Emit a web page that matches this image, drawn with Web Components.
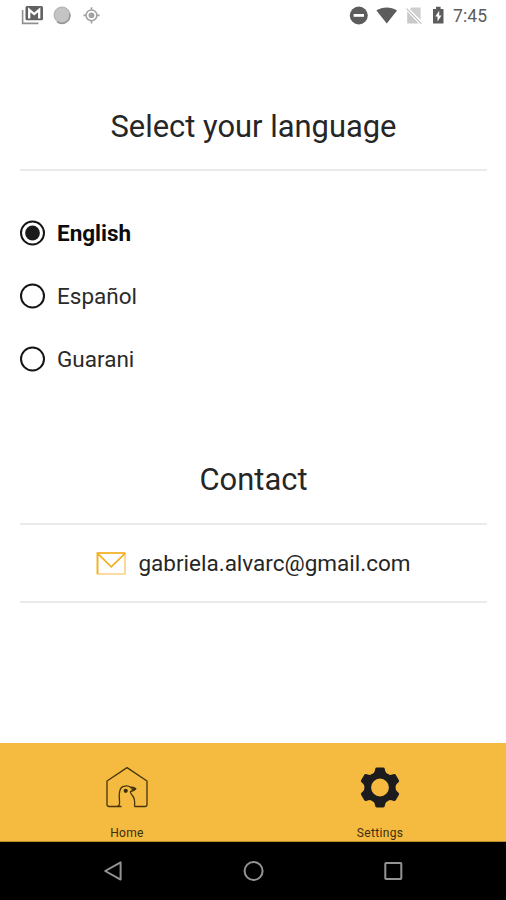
<!DOCTYPE html>
<html lang="en">
<head>
<meta charset="utf-8">
<meta name="viewport" content="width=device-width, initial-scale=1">
<title>Settings</title>
<style>
  html, body {
    margin: 0;
    height: 100%;
    overflow: hidden;
    background: #fff;
    font-family: Roboto, "Liberation Sans", sans-serif;
  }
</style>
</head>
<body>
<settings-app></settings-app>

<script>
class StatusBar extends HTMLElement {
  constructor() {
    super();
    this.root = this.attachShadow({ mode: 'open' });
  }

  connectedCallback() {
    this.root.innerHTML = `
      <style>
        :host { display: flex; justify-content: space-between; height: 32px; }
        svg { display: block; }
        .right { display: flex; }
        time {
          width: 53px;
          font-size: 17.5px;
          line-height: 32px;
          letter-spacing: 0.1px;
          color: #5c5c5c;
        }
      </style>
      <svg width="110" height="32" viewBox="0 0 110 32">
        <path d="M22.6 10v13.4H38.5" fill="none" stroke="#909090" stroke-width="1.6"/>
        <rect x="25.5" y="6" width="17.5" height="14.2" rx="1.5" fill="#626262"/>
        <path d="M29.2 18.5V9.8l5 4.3 5-4.3v8.7" fill="none" stroke="#fff" stroke-width="2.3"/>
        <circle cx="62" cy="15" r="8" fill="#c4c4c4" stroke="#b0b0b0"/>
        <path d="M57 21.6a8 8 0 0 0 12.7-8" fill="none" stroke="#949494" stroke-width="1.5"/>
        <circle cx="91.5" cy="15.3" r="5.4" fill="none" stroke="#a2a2a2" stroke-width="1.5"/>
        <circle cx="91.5" cy="15.3" r="2.9" fill="#a2a2a2"/>
        <path d="M91.5 7.2v3M91.5 20.4v3M83.4 15.3h3M96.6 15.3h3" stroke="#a2a2a2" stroke-width="1.7"/>
      </svg>
      <div class="right">
        <svg width="113" height="32" viewBox="340 0 113 32">
          <circle cx="358.8" cy="15.5" r="9" fill="#5c5c5c"/>
          <rect x="353.6" y="14" width="10.4" height="2.8" fill="#fff"/>
          <path d="M376.4 10.6c6-4.3 14.6-4.3 20.6 0L386.8 23.4z" fill="#5c5c5c"/>
          <path d="M411.6 7.6h9v13.4L408.8 9.8z" fill="#cfcfcf"/>
          <path d="M407.2 11.6V23.4h11.6z" fill="#c9c9c9"/>
          <path d="M406.6 8.6l14.8 15" stroke="#bdbdbd" stroke-width="1.3"/>
          <path d="M408.2 8.4l13.6 13.6" stroke="#fff" stroke-width="1.3"/>
          <path d="M433 9h3V6.8h4.6V9h2.9v14.6H433z" fill="#5c5c5c"/>
          <path d="M439.2 10.8l-3.9 5.8h2.2v4.8l4-6h-2.3z" fill="#fff"/>
        </svg>
        <time>7:45</time>
      </div>
    `;
  }
}
customElements.define('status-bar', StatusBar);

class SectionTitle extends HTMLElement {
  constructor() {
    super();
    this.root = this.attachShadow({ mode: 'open' });
    this.root.innerHTML = `
      <style>
        :host {
          display: block;
          height: 64px;
          border-bottom: 2px solid #ebebeb;
          text-align: center;
        }
        h2 {
          margin: 0;
          padding-top: var(--title-offset, 1px);
          font-size: 30.9px;
          font-weight: 400;
          line-height: 41px;
          color: #262626;
        }
      </style>
      <h2><slot></slot></h2>
    `;
  }
}
customElements.define('section-title', SectionTitle);

class LanguageOption extends HTMLElement {
  constructor() {
    super();
    this.root = this.attachShadow({ mode: 'open' });
  }

  connectedCallback() {
    const dot = this.hasAttribute('checked')
      ? '<circle cx="12.5" cy="13" r="7.4" fill="#1a1a1a"/>' : '';
    this.root.innerHTML = `
      <style>
        :host {
          display: flex;
          align-items: center;
          gap: 11px;
          height: 26px;
          font-size: 22.5px;
          color: #2a2a2a;
          cursor: pointer;
        }
        :host([checked]) { font-weight: 700; color: #0c0c0c; }
        span { line-height: 28px; }
      </style>
      <svg width="26" height="26" viewBox="0 0 26 26">
        <circle cx="12.5" cy="13" r="11.5" fill="none" stroke="#141414" stroke-width="2"/>
        ${dot}
      </svg>
      <span><slot></slot></span>
    `;
  }
}
customElements.define('language-option', LanguageOption);

class ContactRow extends HTMLElement {
  constructor() {
    super();
    this.root = this.attachShadow({ mode: 'open' });
    this.root.innerHTML = `
      <style>
        :host {
          display: flex;
          align-items: center;
          justify-content: center;
          gap: 12px;
          height: 76px;
          border-bottom: 2px solid #ebebeb;
          font-size: 22.5px;
          color: #262626;
        }
        span { padding-bottom: 1px; }
      </style>
      <svg width="30" height="23" viewBox="0 0 30 23">
        <path d="M1.5 22V1H29V22Z" fill="none" stroke="#fbd084" stroke-width="1.6"/>
        <path d="M1.5 22V1H29M1.5 1.4L15.3 14.8 29 1.4" fill="none" stroke="#f5b020" stroke-width="1.7"/>
      </svg>
      <span><slot></slot></span>
    `;
  }
}
customElements.define('contact-row', ContactRow);

class TabItem extends HTMLElement {
  constructor() {
    super();
    this.root = this.attachShadow({ mode: 'open' });
    this.root.innerHTML = `
      <style>
        :host {
          flex: 1;
          display: flex;
          flex-direction: column;
          align-items: center;
          padding-top: 22px;
          font-size: 12px;
          letter-spacing: 0.35px;
          color: #3c2e10;
        }
        span { margin-top: 15px; padding-left: 1px; line-height: 16px; }
      </style>
      <slot name="icon"></slot>
      <span><slot></slot></span>
    `;
  }
}
customElements.define('tab-item', TabItem);

class TabBar extends HTMLElement {
  constructor() {
    super();
    this.root = this.attachShadow({ mode: 'open' });
    this.root.innerHTML = `
      <style>
        :host {
          display: flex;
          box-sizing: border-box;
          height: 99px;
          overflow: hidden;
          background: #f5bb40;
          border-bottom: 1px solid #b98a28;
        }
      </style>
      <slot></slot>
    `;
  }
}
customElements.define('tab-bar', TabBar);

// android back / home / recents
class SystemNav extends HTMLElement {
  constructor() {
    super();
    this.root = this.attachShadow({ mode: 'open' });
    this.root.innerHTML = `
      <style>
        :host {
          display: flex;
          justify-content: center;
          gap: 116px;
          height: 58px;
          box-sizing: border-box;
          padding: 17px 0 0 1px;
          background: #000;
        }
        svg { fill: none; stroke: #949494; stroke-width: 2; stroke-linejoin: round; }
      </style>
      <svg width="24" height="24" viewBox="0 0 24 24"><path d="M18.6 3.4v17.2L3.2 12z"/></svg>
      <svg width="24" height="24" viewBox="0 0 24 24"><circle cx="11.6" cy="12" r="9"/></svg>
      <svg width="24" height="24" viewBox="0 0 24 24"><rect x="3.3" y="4" width="16" height="16" rx="0.8"/></svg>
    `;
  }
}
customElements.define('system-nav', SystemNav);

class SettingsApp extends HTMLElement {
  constructor() {
    super();
    this.root = this.attachShadow({ mode: 'open' });
  }

  connectedCallback() {
    this.render();
    this.root.querySelectorAll('language-option').forEach(option => {
      option.addEventListener('click', () => this.select(option));
    });
  }

  select(option) {
    this.root.querySelectorAll('language-option').forEach(item => {
      item.toggleAttribute('checked', item === option);
      item.connectedCallback();
    });
  }

  render() {
    const teeth = [0, 60, 120, 180, 240, 300].map(angle =>
      `<path d="M-7-13L-5.2-16.5-4.8-18.6Q-4.5-20-3.2-20H3.2Q4.5-20 4.8-18.6L5.2-16.5 7-13Z" transform="rotate(${angle})"/>`
    ).join('');

    this.root.innerHTML = `
      <style>
        :host { display: flex; flex-direction: column; height: 100vh; }
        main { flex: 1; padding: 73px 19px 0 20px; }
        .languages { display: grid; gap: 37px; padding: 49px 0 87px; }
        .contact { --title-offset: 0px; }
      </style>
      <status-bar></status-bar>
      <main>
        <section-title>Select your language</section-title>
        <div class="languages">
          <language-option checked>English</language-option>
          <language-option>Español</language-option>
          <language-option>Guarani</language-option>
        </div>
        <section-title class="contact">Contact</section-title>
        <contact-row>gabriela.alvarc@gmail.com</contact-row>
      </main>
      <tab-bar>
        <tab-item>
          <svg slot="icon" width="44" height="45" viewBox="0 0 44 45" fill="none" stroke="#46350f" stroke-width="1.3" stroke-linejoin="round">
            <path d="M16.5 41.5H4Q2 41.5 2 39.5V16L22 2.6 42 16v23.5q0 2-2 2H29.5"/>
            <path d="M12.5 41.5Q15 41 14.5 36C14 31 13.3 22.5 18.5 21.3C21 20.6 24 20.7 25.5 22.3Q28.5 21.5 30.6 23.8Q29 26.7 25.5 26.3Q25 28 27 30C30 33 30 37 29.5 41.5"/>
            <path d="M25.5 22.5l5 1.3-4 1.6" stroke-width="1.8"/>
            <circle cx="20.7" cy="25.8" r="1.5" fill="#2b210a"/>
          </svg>
          Home
        </tab-item>
        <tab-item>
          <svg slot="icon" width="44" height="45" viewBox="-22 -22.5 44 45" fill="#1c1c1e">
            <circle r="12.3" fill="none" stroke="#1c1c1e" stroke-width="6.8"/>
            ${teeth}
          </svg>
          Settings
        </tab-item>
      </tab-bar>
      <system-nav></system-nav>
    `;
  }
}
customElements.define('settings-app', SettingsApp);
</script>
</body>
</html>
